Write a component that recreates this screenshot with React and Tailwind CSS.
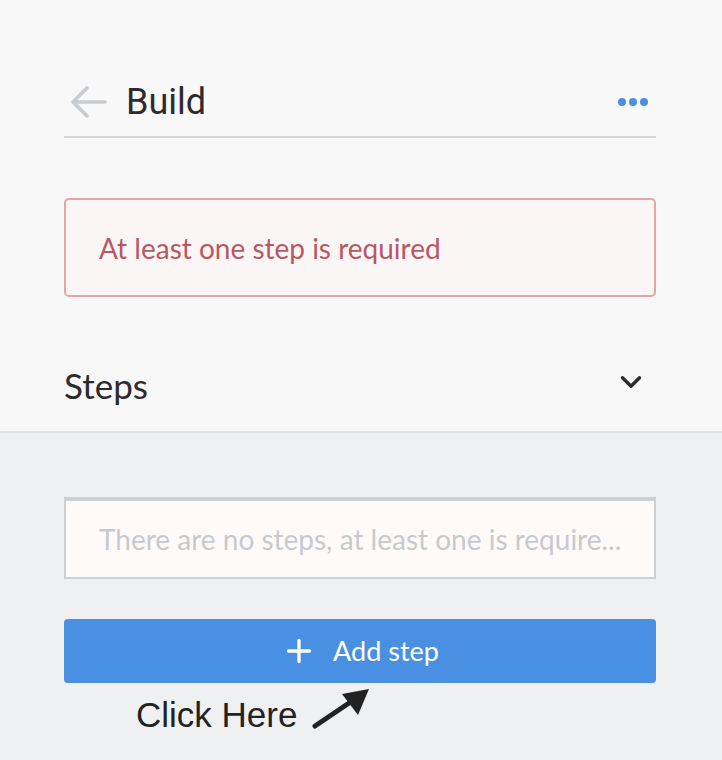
import { ChevronDown, Plus } from 'lucide-react';

export default function App() {
  return (
    <div className="w-[722px] h-[760px] overflow-hidden bg-[#eef0f1] font-['Lato',sans-serif]">
      {/* top panel */}
      <div className="bg-[#f8f8f8] border-b-2 border-[#dfe1e3] pl-16 pr-[66px] pt-[68px]">
        <div className="flex items-center h-[70px] border-b-2 border-[#d3d6da]">
          <svg width="38" height="34" viewBox="0 0 38 34" className="ml-[5px]">
            <path d="M36 17H4M18 3L4 17l14 14" fill="none" stroke="#c8cbcf" strokeWidth="3.6" strokeLinecap="round" strokeLinejoin="round" />
          </svg>
          <h1 className="ml-[19px] text-[36px] text-[#2e2a2e] font-['Roboto',sans-serif] leading-none">Build</h1>
          <div className="ml-auto mr-[8px] flex gap-[3px]">
            <span className="w-[8px] h-[8px] rounded-full bg-[#4a90e2]" />
            <span className="w-[8px] h-[8px] rounded-full bg-[#4a90e2]" />
            <span className="w-[8px] h-[8px] rounded-full bg-[#4a90e2]" />
          </div>
        </div>

        <div className="mt-[60px] h-[99px] flex items-center px-[33px] border-2 border-[#e7a4a8] rounded-[5px] bg-[#fbf6f6]">
          <span className="text-[28px] text-[#b95762]">At least one step is required</span>
        </div>

        <div className="flex items-center justify-between mt-[42px] h-[92px]">
          <span className="text-[35px] text-[#2e2a2e]">Steps</span>
          <ChevronDown className="w-[34px] h-[34px] text-[#2e2a2e] mr-[8px] -mt-[6px]" strokeWidth={2.4} />
        </div>
      </div>

      {/* lower area */}
      <div className="pl-16 pr-[66px] pt-[64px]">
        <div className="h-[82px] flex items-center px-[33px] bg-[#fffafa] border-2 border-t-[4px] border-[#cdd0d3]">
          <span className="text-[28px] text-[#c7cacd] whitespace-nowrap">There are no steps, at least one is require...</span>
        </div>

        <button className="mt-[40px] w-full h-[64px] flex items-center justify-center gap-[16px] bg-[#4a90e2] rounded-[4px] text-white">
          <Plus className="w-[36px] h-[36px]" strokeWidth={2.2} />
          <span className="text-[27px]">Add step</span>
        </button>

        <div className="flex items-center ml-[72px] mt-[6px]">
          <span className="text-[35px] text-[#222] font-['Liberation_Sans',sans-serif]">Click Here</span>
          <svg width="62" height="44" viewBox="0 0 62 44" className="ml-[14px] -mt-[14px]">
            <line x1="4" y1="40" x2="44" y2="13" stroke="#222" strokeWidth="5" strokeLinecap="round" />
            <polygon points="58,3 31,8 47,29" fill="#222" />
          </svg>
        </div>
      </div>
    </div>
  );
}
